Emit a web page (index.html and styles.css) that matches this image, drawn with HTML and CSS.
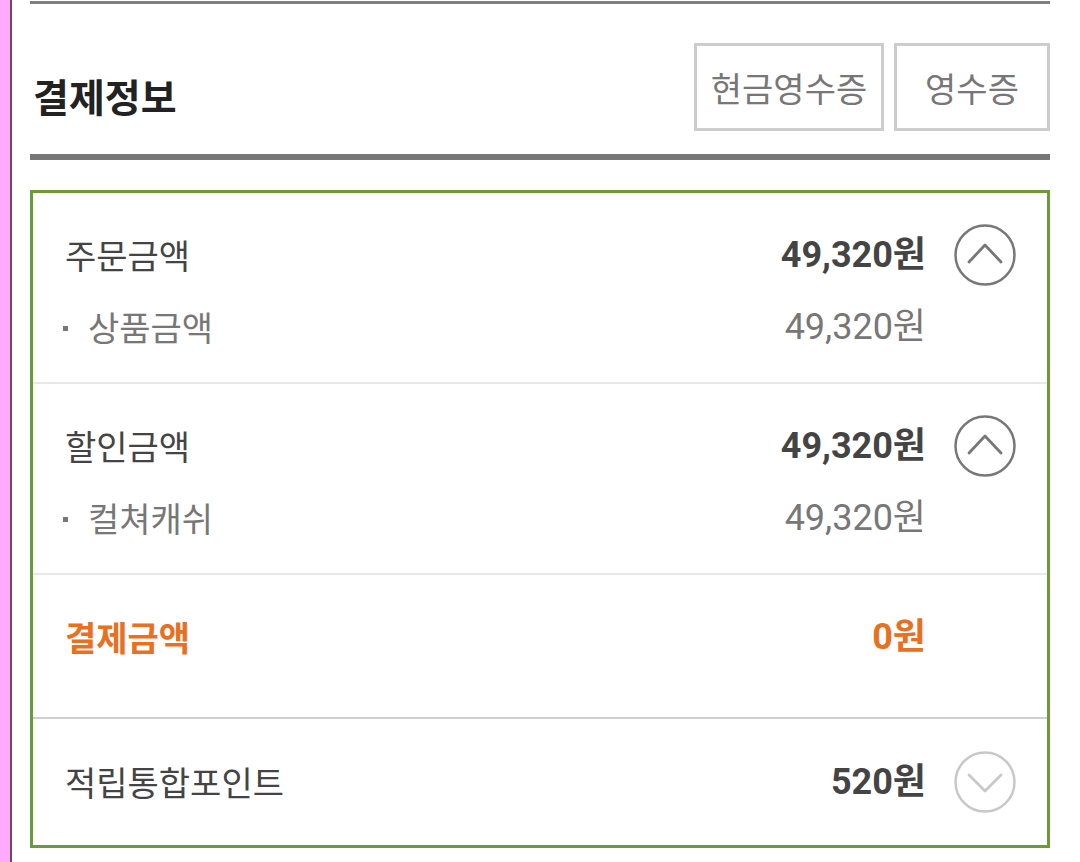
FILE: index.html
```html
<!DOCTYPE html>
<html lang="ko">
<head>
<meta charset="utf-8">
<link rel="stylesheet" href="styles.css">
</head>
<body>
<div class="page">
  <div class="side"></div>
  <main class="main">
    <div class="rule-top"></div>
    <header class="head">
      <h1 class="title">결제정보</h1>
      <div class="btns">
        <button class="btn btn-cash">현금영수증</button>
        <button class="btn btn-rcpt">영수증</button>
      </div>
    </header>
    <div class="rule-mid"></div>

    <section class="box">
      <div class="row sep-light">
        <div class="grid">
          <span class="label">주문금액</span>
          <span class="amt">49,320원</span>
          <span class="ico">
            <svg viewBox="0 0 62 62" width="62" height="62"><circle cx="31" cy="31" r="29.5" fill="none" stroke="#777" stroke-width="2.5"/><path d="M15 38 L31 21 L47 38" fill="none" stroke="#777" stroke-width="2.8" stroke-linecap="round" stroke-linejoin="round"/></svg>
          </span>
          <span class="label sub">상품금액</span>
          <span class="amt sub-amt">49,320원</span>
          <span></span>
        </div>
      </div>

      <div class="row sep-light">
        <div class="grid">
          <span class="label">할인금액</span>
          <span class="amt">49,320원</span>
          <span class="ico">
            <svg viewBox="0 0 62 62" width="62" height="62"><circle cx="31" cy="31" r="29.5" fill="none" stroke="#777" stroke-width="2.5"/><path d="M15 38 L31 21 L47 38" fill="none" stroke="#777" stroke-width="2.8" stroke-linecap="round" stroke-linejoin="round"/></svg>
          </span>
          <span class="label sub">컬쳐캐쉬</span>
          <span class="amt sub-amt">49,320원</span>
          <span></span>
        </div>
      </div>

      <div class="row row-pay sep-dark">
        <div class="grid">
          <span class="label pay">결제금액</span>
          <span class="amt pay">0원</span>
          <span></span>
        </div>
      </div>

      <div class="row row-point">
        <div class="grid">
          <span class="label">적립통합포인트</span>
          <span class="amt">520원</span>
          <span class="ico">
            <svg viewBox="0 0 62 62" width="62" height="62"><circle cx="31" cy="31" r="29.5" fill="none" stroke="#c8c8c8" stroke-width="2.5"/><path d="M15 24 L31 40 L47 24" fill="none" stroke="#c8c8c8" stroke-width="2.8" stroke-linecap="round" stroke-linejoin="round"/></svg>
          </span>
        </div>
      </div>
    </section>
  </main>
</div>
</body>
</html>
```

FILE: styles.css
```css
* { box-sizing: border-box; }
html, body { margin: 0; padding: 0; background: #fff; }
body {
  font-family: Roboto, "Noto Sans CJK KR", "Noto Sans", sans-serif;
  color: #444;
}
.page {
  display: flex;
  height: 862px;
  overflow: hidden;
}
.side {
  width: 12px;
  flex: none;
  background: #ffaaff;
  border-right: 2px solid #6a4a6a;
}
.main {
  width: 1020px;
  margin-left: 18px;
}
.rule-top {
  height: 3px;
  margin-top: 1px;
  background: #808080;
}
.head {
  display: flex;
  justify-content: space-between;
  align-items: flex-start;
  padding-top: 39px;
  height: 150px;
}
.title {
  margin: 27px 0 0 3px;
  font-size: 39px;
  line-height: 50px;
  font-weight: 700;
  color: #222;
  font-family: "Noto Sans CJK KR", sans-serif;
}
.btns {
  display: flex;
  gap: 10px;
}
.btn {
  height: 88px;
  border: 3px solid #cccccc;
  background: #fff;
  color: #777;
  font-family: "Noto Sans CJK KR", sans-serif;
  font-size: 34px;
  padding: 0;
  margin: 0;
}
.btn-cash { width: 190px; }
.btn-rcpt { width: 156px; }
.rule-mid {
  height: 6px;
  background: #777;
}
.box {
  margin-top: 30px;
  border: 3px solid #6b9a3a;
  height: 658px;
}
.row {
  padding: 40px 31px 33px 32px;
}
.sep-light { border-bottom: 2px solid #e8e8e8; }
.sep-dark { border-bottom: 2px solid #d0d0d0; }
.row-pay { padding-bottom: 58px; }
.row-point { padding-top: 41px; padding-bottom: 41px; }
.grid {
  display: grid;
  grid-template-columns: 1fr auto 62px;
  column-gap: 28px;
  row-gap: 28px;
  align-items: center;
  line-height: 44px;
}
.label {
  font-family: "Noto Sans CJK KR", sans-serif;
  font-size: 34px;
  color: #444;
}
.label.sub {
  color: #777;
}
.label.sub::before {
  content: "";
  display: inline-block;
  width: 5px;
  height: 5px;
  background: #777;
  vertical-align: middle;
  margin: 0 20px 6px -2px;
}
.amt {
  font-size: 36px;
  font-weight: 700;
  color: #444;
  text-align: right;
}
.amt.sub-amt {
  font-weight: 400;
  color: #777;
}
.pay {
  color: #e8701f;
  font-weight: 700;
}
.ico {
  display: flex;
  height: 44px;
  align-items: center;
  justify-content: center;
}
.ico svg { flex: none; display: block; }
```
